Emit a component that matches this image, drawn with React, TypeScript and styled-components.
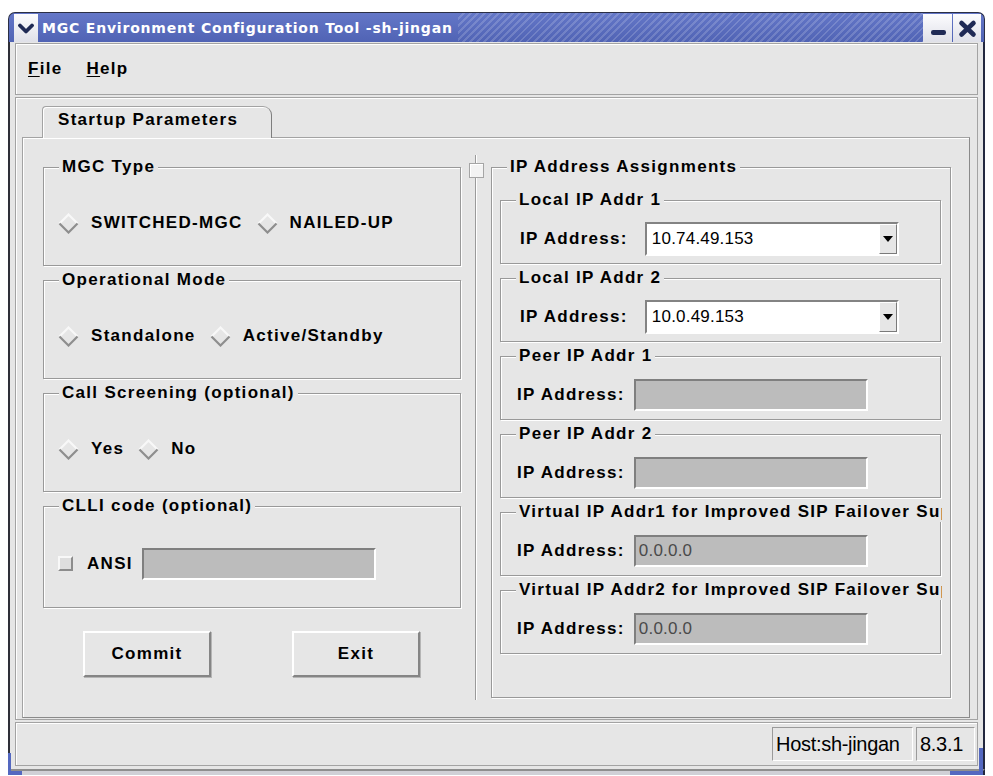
import React from "react";
import styled, { createGlobalStyle } from "styled-components";

const FACE = "#e6e6e6";
const EDGE = "#a3a3a3";
const SHADOW = "#8a8a8a";
const NAVY = "#1f2a55";
const FRAME_BLUE = "#5468c0";
const UI_FONT = `"Liberation Sans", Arial, Helvetica, sans-serif`;

const GlobalStyle = createGlobalStyle`
    body {
        margin: 0;
        background: #ffffff;
        font-family: ${UI_FONT};
        color: #000;
    }
`;

const Diamond = () => (
    <svg width="21" height="21" viewBox="0 0 21 21">
        <path d="M1.5 10.5 L10.5 1.5 L19.5 10.5" fill="none" stroke="#f8f8f8" strokeWidth="2.2" />
        <path d="M1.5 10.5 L10.5 19.5 L19.5 10.5" fill="none" stroke="#8e8e8e" strokeWidth="2.2" />
    </svg>
);

const Radio = ({ label }: { label: string }) => (
    <RadioOption>
        <Diamond />
        <Label>{label}</Label>
    </RadioOption>
);

const Group = ({
    title,
    height,
    children,
}: {
    title: string;
    height: number;
    children: React.ReactNode;
}) => (
    <GroupBox $h={height}>
        <GroupTitle>{title}</GroupTitle>
        {children}
    </GroupBox>
);

const ComboRow = ({ value }: { value: string }) => (
    <GroupBody $pl={19} $gap={17}>
        <Label>IP Address:</Label>
        <Combo>
            <ComboText>{value}</ComboText>
            <ComboButton>
                <Arrow />
            </ComboButton>
        </Combo>
    </GroupBody>
);

const FieldRow = ({ value }: { value?: string }) => (
    <GroupBody $pl={16} $gap={9}>
        <Label>IP Address:</Label>
        <DisabledField>{value}</DisabledField>
    </GroupBody>
);

const App = () => {
    return (
        <>
            <GlobalStyle />
            <Window>
                <TitleBar>
                    <FrameButton $w={24}>
                        <svg width="16" height="11" viewBox="0 0 16 11">
                            <polyline
                                points="2,2.5 8,8.5 14,2.5"
                                fill="none"
                                stroke={NAVY}
                                strokeWidth="3.8"
                                strokeLinecap="round"
                                strokeLinejoin="round"
                            />
                        </svg>
                    </FrameButton>
                    <TitleText>MGC Environment Configuration Tool -sh-jingan</TitleText>
                    <Stripes />
                    <FrameButton $w={29}>
                        <svg width="28" height="28" viewBox="0 0 28 28">
                            <rect x="7" y="16" width="15" height="5" rx="2.2" fill={NAVY} />
                        </svg>
                    </FrameButton>
                    <FrameButton $w={28}>
                        <svg width="28" height="28" viewBox="0 0 28 28">
                            <path
                                d="M8.5 9 L20.5 20.5 M20.5 9 L8.5 20.5"
                                stroke={NAVY}
                                strokeWidth="4.6"
                                strokeLinecap="round"
                            />
                        </svg>
                    </FrameButton>
                </TitleBar>

                <Body>
                    <MenuBar>
                        <MenuItem>
                            <u>F</u>ile
                        </MenuItem>
                        <MenuItem>
                            <u>H</u>elp
                        </MenuItem>
                    </MenuBar>

                    <MainBox>
                        <TabRow>
                            <Tab>Startup Parameters</Tab>
                        </TabRow>
                        <Pane>
                            <LeftColumn>
                                <Group title="MGC Type" height={99}>
                                    <GroupBody $pl={14} $gap={14}>
                                        <Radio label="SWITCHED-MGC" />
                                        <Radio label="NAILED-UP" />
                                    </GroupBody>
                                </Group>
                                <Group title="Operational Mode" height={99}>
                                    <GroupBody $pl={14} $gap={14}>
                                        <Radio label="Standalone" />
                                        <Radio label="Active/Standby" />
                                    </GroupBody>
                                </Group>
                                <Group title="Call Screening (optional)" height={99}>
                                    <GroupBody $pl={14} $gap={14}>
                                        <Radio label="Yes" />
                                        <Radio label="No" />
                                    </GroupBody>
                                </Group>
                                <Group title="CLLI code (optional)" height={102}>
                                    <GroupBody $pl={14} $gap={0}>
                                        <CheckBox />
                                        <CheckLabel>ANSI</CheckLabel>
                                        <DisabledField />
                                    </GroupBody>
                                </Group>
                                <ButtonRow>
                                    <PushButton>Commit</PushButton>
                                    <PushButton>Exit</PushButton>
                                </ButtonRow>
                            </LeftColumn>

                            <Divider>
                                <SplitLine $h={8} />
                                <Knob />
                                <SplitLine />
                            </Divider>

                            <RightColumn>
                                <Group title="IP Address Assignments" height={531}>
                                    <InnerList>
                                        <Group title="Local IP Addr 1" height={64}>
                                            <ComboRow value="10.74.49.153" />
                                        </Group>
                                        <Group title="Local IP Addr 2" height={64}>
                                            <ComboRow value="10.0.49.153" />
                                        </Group>
                                        <Group title="Peer IP Addr 1" height={64}>
                                            <FieldRow />
                                        </Group>
                                        <Group title="Peer IP Addr 2" height={64}>
                                            <FieldRow />
                                        </Group>
                                        <Group
                                            title="Virtual IP Addr1 for Improved SIP Failover Support"
                                            height={64}
                                        >
                                            <FieldRow value="0.0.0.0" />
                                        </Group>
                                        <Group
                                            title="Virtual IP Addr2 for Improved SIP Failover Support"
                                            height={64}
                                        >
                                            <FieldRow value="0.0.0.0" />
                                        </Group>
                                    </InnerList>
                                </Group>
                            </RightColumn>
                        </Pane>
                    </MainBox>

                    <StatusBar>
                        <StatusCell $w={141}>Host:sh-jingan</StatusCell>
                        <StatusCell $w={59}>8.3.1</StatusCell>
                    </StatusBar>
                </Body>
                <Foot />
                <CornerLeft />
                <CornerRight />
            </Window>
        </>
    );
};

const Window = styled.div`
    position: relative;
    width: 977px;
    margin: 12px 0 0 8px;
`;

const TitleBar = styled.div`
    display: flex;
    align-items: flex-end;
    height: 30px;
    box-sizing: border-box;
    padding: 0 3px 0 5px;
    background: linear-gradient(#6477c8, #5063b4);
    border: 1px solid #2b2f45;
    border-bottom: none;
    border-radius: 7px 7px 0 0;
`;

const FrameButton = styled.div<{ $w: number }>`
    display: flex;
    align-items: center;
    justify-content: center;
    flex-shrink: 0;
    width: ${({ $w }) => $w}px;
    height: 28px;
    background: linear-gradient(#fcfcfe, #dfe0e8);
    & + & {
        margin-left: 1px;
    }
`;

const TitleText = styled.span`
    align-self: center;
    margin-left: 4px;
    color: #ffffff;
    font-family: "DejaVu Sans", sans-serif;
    font-size: 14px;
    font-weight: 700;
    letter-spacing: 0.8px;
    white-space: nowrap;
`;

const Stripes = styled.div`
    flex: 1;
    align-self: stretch;
    margin-left: 5px;
    background: repeating-linear-gradient(
        135deg,
        rgba(255, 255, 255, 0) 0 3px,
        rgba(255, 255, 255, 0.16) 3px 5px
    );
`;

const Body = styled.div`
    display: flex;
    flex-direction: column;
    gap: 2px;
    background: ${FACE};
    border-left: 2px solid #2e2f38;
    border-right: 2px solid #23283f;
    padding: 1px 5px 3px;
`;

const MenuBar = styled.div`
    display: flex;
    align-items: center;
    height: 52px;
    box-sizing: border-box;
    border: 1px solid ${EDGE};
    box-shadow: inset 1px 1px 0 #fff;
`;

const MenuItem = styled.span`
    padding: 0 12px;
    font-size: 17px;
    font-weight: 700;
    letter-spacing: 1.3px;
    u {
        text-underline-offset: 2px;
    }
`;

const MainBox = styled.div`
    display: flex;
    flex-direction: column;
    height: 623px;
    box-sizing: border-box;
    padding: 8px 7px 1px 6px;
    border: 1px solid ${EDGE};
    box-shadow: inset 1px 1px 0 #fff;
`;

const TabRow = styled.div`
    display: flex;
    padding-left: 20px;
`;

const Tab = styled.div`
    position: relative;
    z-index: 1;
    display: flex;
    align-items: center;
    width: 230px;
    height: 32px;
    box-sizing: border-box;
    margin-bottom: -1px;
    padding: 0 0 6px 15px;
    background: ${FACE};
    border: 1px solid ${EDGE};
    border-right-color: #7e7e7e;
    border-bottom: none;
    border-radius: 4px 9px 0 0;
    box-shadow: inset 1px 1px 0 #fff;
    font-size: 17px;
    font-weight: 700;
    letter-spacing: 1.3px;
    white-space: nowrap;
`;

const Pane = styled.div`
    flex: 1;
    display: flex;
    min-height: 0;
    padding: 0 18px 0 20px;
    border: 1px solid ${EDGE};
    border-right-color: ${SHADOW};
    border-bottom-color: ${SHADOW};
    box-shadow: inset 1px 1px 0 #fff;
`;

const LeftColumn = styled.div`
    display: flex;
    flex-direction: column;
    flex-shrink: 0;
    gap: 14px;
    width: 418px;
    padding-top: 29px;
`;

const RightColumn = styled.div`
    flex: 1;
    min-width: 0;
    display: flex;
    flex-direction: column;
    padding-top: 29px;
`;

const GroupBox = styled.div<{ $h: number }>`
    display: flex;
    flex-direction: column;
    min-width: 0;
    height: ${({ $h }) => $h}px;
    box-sizing: border-box;
    border: 1px solid #999999;
    box-shadow: inset 1px 1px 0 #fff, 1px 1px 0 #fff;
`;

const GroupTitle = styled.div`
    align-self: flex-start;
    max-width: calc(100% - 13px);
    height: 20px;
    margin: -11px 0 0 15px;
    padding: 0 3px;
    box-sizing: border-box;
    overflow: hidden;
    background: ${FACE};
    font-size: 17px;
    font-weight: 700;
    line-height: 20px;
    letter-spacing: 1.3px;
    white-space: nowrap;
`;

const GroupBody = styled.div<{ $pl: number; $gap: number }>`
    flex: 1;
    display: flex;
    align-items: center;
    gap: ${({ $gap }) => $gap}px;
    padding: 4px 0 0 ${({ $pl }) => $pl}px;
`;

const InnerList = styled.div`
    display: flex;
    flex-direction: column;
    gap: 14px;
    padding: 23px 9px 0 8px;
`;

const RadioOption = styled.label`
    display: flex;
    align-items: center;
    gap: 12px;
`;

const Label = styled.span`
    flex-shrink: 0;
    font-size: 17px;
    font-weight: 700;
    line-height: 20px;
    letter-spacing: 1.3px;
    white-space: nowrap;
`;

const CheckLabel = styled(Label)`
    margin: 0 9px 0 14px;
`;

const CheckBox = styled.span`
    display: block;
    flex-shrink: 0;
    width: 15px;
    height: 15px;
    box-sizing: border-box;
    border: 2px solid;
    border-color: #f8f8f8 #8c8c8c #8c8c8c #f8f8f8;
    background: #dedede;
`;

const DisabledField = styled.div`
    display: flex;
    align-items: center;
    flex-shrink: 0;
    width: 234px;
    height: 32px;
    box-sizing: border-box;
    padding-left: 3px;
    border: 2px solid;
    border-color: #7f7f7f #ffffff #ffffff #7f7f7f;
    background: #bcbcbc;
    color: #4a4a4a;
    font-size: 17px;
    letter-spacing: 0.2px;
`;

const Combo = styled.div`
    display: flex;
    flex-shrink: 0;
    width: 254px;
    height: 34px;
    box-sizing: border-box;
    border: 2px solid;
    border-color: #838383 #ffffff #ffffff #838383;
    background: #ffffff;
`;

const ComboText = styled.span`
    flex: 1;
    align-self: center;
    padding-left: 5px;
    font-size: 17px;
    letter-spacing: 0.2px;
`;

const ComboButton = styled.div`
    display: flex;
    align-items: center;
    justify-content: center;
    width: 18px;
    box-sizing: border-box;
    background: ${FACE};
    border: 1px solid;
    border-color: #ffffff #7a7a7a #7a7a7a #ffffff;
`;

const Arrow = styled.span`
    width: 0;
    height: 0;
    border-left: 5px solid transparent;
    border-right: 5px solid transparent;
    border-top: 6px solid #000;
`;

const ButtonRow = styled.div`
    display: flex;
    gap: 81px;
    margin-top: 9px;
    padding-left: 40px;
`;

const PushButton = styled.button`
    width: 128px;
    height: 46px;
    box-sizing: border-box;
    padding: 0;
    background: ${FACE};
    border: 2px solid;
    border-color: #ffffff #858585 #858585 #ffffff;
    box-shadow: 1px 1px 0 #b5b5b5;
    font-family: ${UI_FONT};
    font-size: 17px;
    font-weight: 700;
    letter-spacing: 1.3px;
    color: #000;
`;

const Divider = styled.div`
    display: flex;
    flex-direction: column;
    align-items: center;
    flex-shrink: 0;
    width: 30px;
    padding: 17px 0 17px 0;
`;

const SplitLine = styled.div<{ $h?: number }>`
    width: 2px;
    ${({ $h }) => ($h ? `height: ${$h}px;` : "flex: 1;")}
    background: linear-gradient(90deg, #9a9a9a 50%, #ffffff 50%);
`;

const Knob = styled.div`
    width: 15px;
    height: 15px;
    box-sizing: border-box;
    border: 1px solid #a5a5a5;
    background: #f3f3f3;
    box-shadow: inset 1px 1px 0 #fff;
`;

const StatusBar = styled.div`
    display: flex;
    align-items: center;
    justify-content: flex-end;
    gap: 3px;
    height: 44px;
    box-sizing: border-box;
    padding-right: 2px;
    border: 1px solid ${EDGE};
    box-shadow: inset 1px 1px 0 #fff;
`;

const StatusCell = styled.div<{ $w: number }>`
    display: flex;
    align-items: center;
    width: ${({ $w }) => $w}px;
    height: 34px;
    box-sizing: border-box;
    padding-left: 3px;
    border: 1px solid;
    border-color: #9a9a9a #ffffff #ffffff #9a9a9a;
    font-size: 20px;
    letter-spacing: -0.3px;
    white-space: nowrap;
`;

const Foot = styled.div`
    height: 4px;
    border-top: 2px solid #8e8e8e;
    border-left: 2px solid #2e2f38;
    border-right: 2px solid #23283f;
    background: #d0d0d6;
`;

const CornerLeft = styled.div`
    position: absolute;
    left: 0;
    bottom: 0;
    width: 14px;
    height: 22px;
    box-sizing: border-box;
    border-left: 3px solid ${FRAME_BLUE};
    border-bottom: 4px solid ${FRAME_BLUE};
`;

const CornerRight = styled.div`
    position: absolute;
    right: 2px;
    bottom: 0;
    width: 33px;
    height: 27px;
    box-sizing: border-box;
    border-right: 4px solid ${FRAME_BLUE};
    border-bottom: 4px solid ${FRAME_BLUE};
`;

export default App;
